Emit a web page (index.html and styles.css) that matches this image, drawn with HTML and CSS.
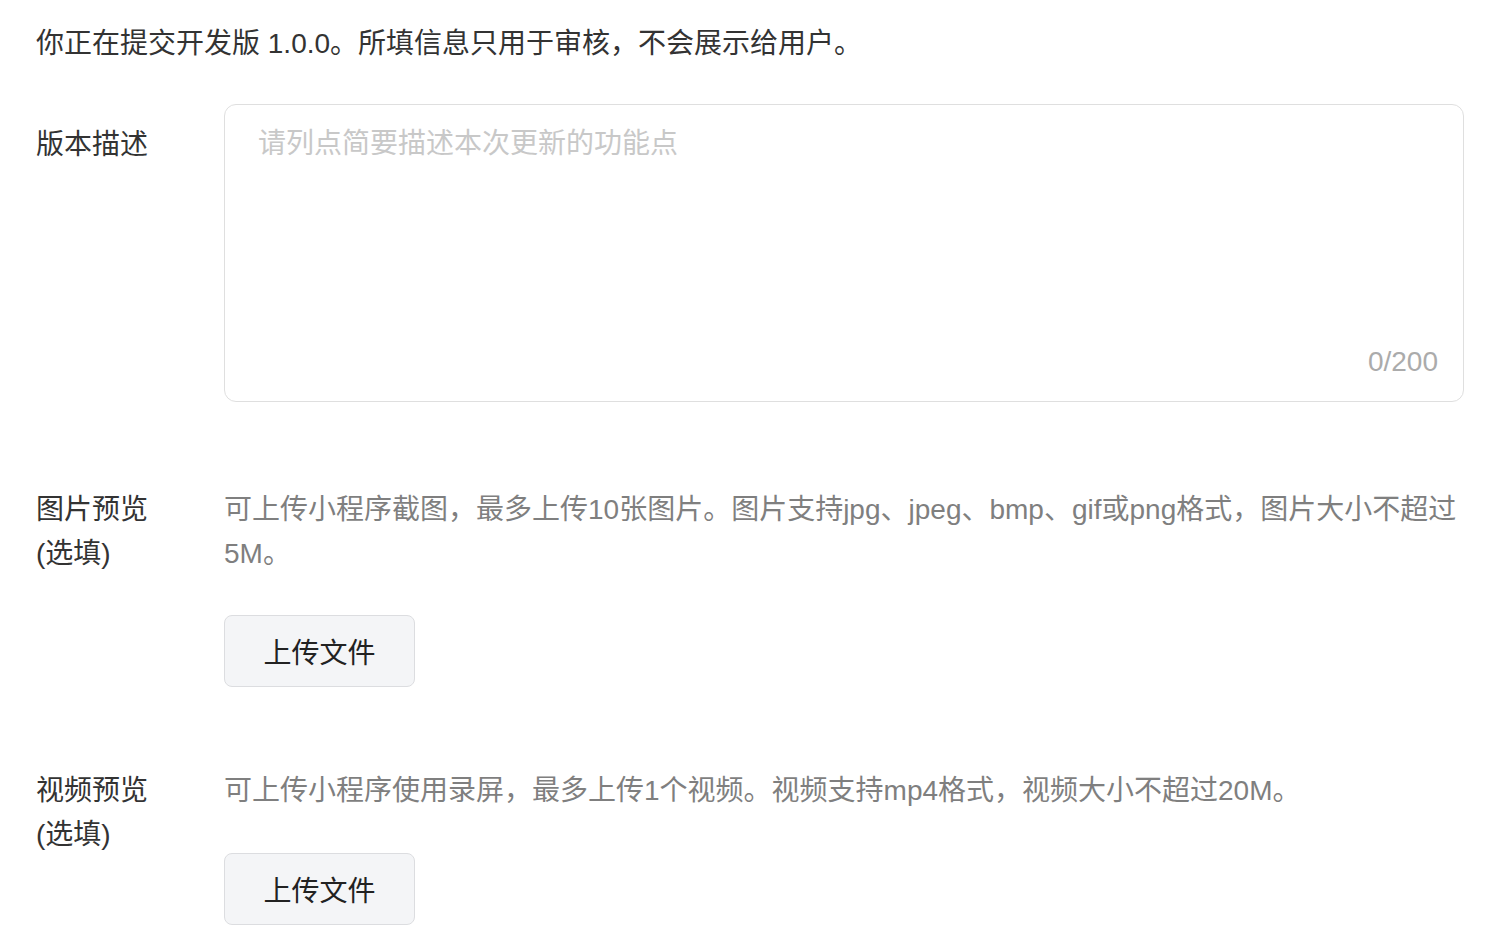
FILE: index.html
```html
<!DOCTYPE html>
<html lang="zh-CN">
<head>
    <meta charset="UTF-8">
    <title>提交审核</title>
    <link rel="stylesheet" href="styles.css">
</head>
<body>

    <!-- 提示 -->
    <p class="tip">你正在提交开发版 1.0.0。所填信息只用于审核，不会展示给用户。</p>

    <!-- 版本描述 -->
    <div class="row">
        <div class="label">版本描述</div>
        <div class="field">
            <div class="textarea">
                <div class="placeholder">请列点简要描述本次更新的功能点</div>
                <div class="counter">0/200</div>
            </div>
        </div>
    </div>

    <!-- 图片预览 -->
    <div class="row row-media">
        <div class="label">图片预览<br>(选填)</div>
        <div class="field">
            <p class="desc">可上传小程序截图，最多上传10张图片。图片支持jpg、jpeg、bmp、gif或png格式，图片大小不超过5M。</p>
            <button class="btn">上传文件</button>
        </div>
    </div>

    <!-- 视频预览 -->
    <div class="row row-media">
        <div class="label">视频预览<br>(选填)</div>
        <div class="field">
            <p class="desc">可上传小程序使用录屏，最多上传1个视频。视频支持mp4格式，视频大小不超过20M。</p>
            <button class="btn">上传文件</button>
        </div>
    </div>

</body>
</html>
```

FILE: styles.css
```css
* {
    margin: 0;
    padding: 0;
    box-sizing: border-box;
}

body {
    font-family: 'Liberation Sans', 'Noto Sans CJK SC', sans-serif;
    font-size: 28px;
    line-height: 44px;
    color: #333;
    background: #fff;
    padding: 22px 34px 0 36px;
}

.tip {
    margin-bottom: 38px;
}

.row {
    display: flex;
}

.label {
    width: 188px;
    flex-shrink: 0;
    color: #333;
}

.row:first-of-type .label {
    margin-top: 19px;
}

.field {
    flex: 1;
}

.textarea {
    height: 298px;
    border: 1px solid #dfdfdf;
    border-radius: 12px;
    padding: 17px 25px 17px 33px;
    display: flex;
    flex-direction: column;
    justify-content: space-between;
}

.placeholder {
    color: #c8c8c8;
}

.counter {
    align-self: flex-end;
    color: #ababab;
}

.row-media {
    margin-top: 86px;
}

.row-media + .row-media {
    margin-top: 82px;
}

.row-media + .row-media .btn {
    margin-top: 40px;
}

.desc {
    color: #7f7f7f;
}

.btn {
    display: block;
    margin-top: 39px;
    width: 191px;
    height: 72px;
    border: 1px solid #dcdde0;
    border-radius: 8px;
    background: #f4f5f7;
    font-family: 'Liberation Sans', 'Noto Sans CJK SC', sans-serif;
    font-size: 28px;
    color: #222;
    cursor: pointer;
}
```
